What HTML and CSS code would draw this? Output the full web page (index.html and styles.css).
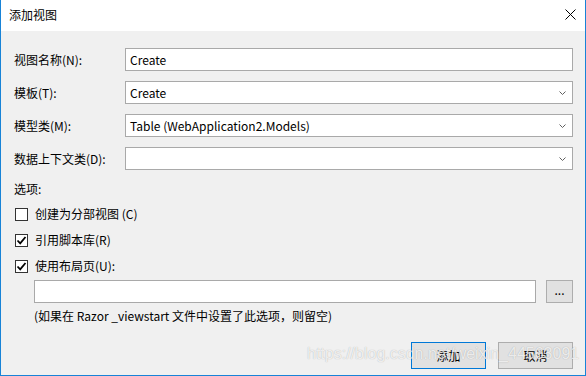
FILE: index.html
```html
<html>

<head>
    <link rel="stylesheet" href="styles.css">
</head>

<body>

    <div class="dialog">
        <div class="titlebar">
            <span class="title">添加视图</span>
            <svg class="close" width="11" height="11" viewBox="0 0 11 11">
                <path d="M0.5 0.5 L10.5 10.5 M10.5 0.5 L0.5 10.5" stroke="#000" stroke-width="1" fill="none" />
            </svg>
        </div>

        <div class="content">
            <div class="fields">
                <label>视图名称(N):</label>
                <div class="field">Create</div>

                <label>模板(T):</label>
                <div class="field combo">Create
                    <svg class="chev" width="7" height="4" viewBox="0 0 7 4"><path d="M0.5 0.5 L3.5 3.5 L6.5 0.5" stroke="#606060" fill="none" /></svg>
                </div>

                <label>模型类(M):</label>
                <div class="field combo">Table (WebApplication2.Models)
                    <svg class="chev" width="7" height="4" viewBox="0 0 7 4"><path d="M0.5 0.5 L3.5 3.5 L6.5 0.5" stroke="#606060" fill="none" /></svg>
                </div>

                <label>数据上下文类(D):</label>
                <div class="field combo">
                    <svg class="chev" width="7" height="4" viewBox="0 0 7 4"><path d="M0.5 0.5 L3.5 3.5 L6.5 0.5" stroke="#606060" fill="none" /></svg>
                </div>
            </div>

            <p class="section">选项:</p>

            <div class="check">
                <span class="box"></span>
                创建为分部视图 (C)
            </div>
            <div class="check">
                <span class="box">
                    <svg width="11" height="11" viewBox="0 0 11 11"><path d="M1.5 5.5 L4.2 8.3 L9.5 2" stroke="#000" stroke-width="1.8" fill="none" /></svg>
                </span>
                引用脚本库(R)
            </div>
            <div class="check">
                <span class="box">
                    <svg width="11" height="11" viewBox="0 0 11 11"><path d="M1.5 5.5 L4.2 8.3 L9.5 2" stroke="#000" stroke-width="1.8" fill="none" /></svg>
                </span>
                使用布局页(U):
            </div>

            <div class="layout">
                <div class="field wide"></div>
                <div class="btn browse">...</div>
            </div>

            <p class="hint">(如果在 Razor _viewstart 文件中设置了此选项，则留空)</p>

            <div class="actions">
                <div class="btn default">添加</div>
                <div class="btn">取消</div>
            </div>
        </div>

        <div class="watermark">https://blog.csdn.net/weixin_44563091</div>
    </div>

</body>

</html>
```

FILE: styles.css
```css
body {
    margin: 0;
    font-family: "Noto Sans CJK SC", "Noto Sans", sans-serif;
    font-size: 12px;
    color: #000;
}

.dialog {
    position: relative;
    width: 584px;
    height: 375px;
    border: 1px solid #1883d7;
    border-top: none;
    background-color: #f0f0f0;
    display: flex;
    flex-direction: column;
}

.titlebar {
    height: 31px;
    background-color: #fff;
    display: flex;
    align-items: center;
    justify-content: space-between;
    padding: 0 9px 0 8px;
}

.title {
    line-height: 16px;
    margin-top: -1px;
}

.close {
    margin-top: -2px;
}

.content {
    padding: 17px 12px 0 12px;
}

.fields {
    display: grid;
    grid-template-columns: 112px 1fr;
    row-gap: 10px;
    align-items: center;
}

.fields label {
    line-height: 23px;
    padding-left: 1px;
}

.field {
    height: 21px;
    line-height: 21px;
    border: 1px solid #a9a9a9;
    background-color: #fff;
    padding-left: 4px;
    position: relative;
}

.combo .chev {
    position: absolute;
    right: 6px;
    top: 9px;
}

.section {
    margin: 11px 0 0 1px;
    line-height: 16px;
}

.check {
    display: flex;
    align-items: center;
    gap: 7px;
    line-height: 16px;
    margin-top: 9px;
    padding-left: 2px;
}

.check + .check {
    margin-top: 10px;
}

.box {
    width: 11px;
    height: 11px;
    border: 1px solid #333;
    background-color: #fff;
    display: flex;
}

.layout {
    display: flex;
    gap: 10px;
    margin: 6px 0 0 21px;
}

.wide {
    flex: 1;
}

.btn {
    border: 1px solid #adadad;
    background-color: #e1e1e1;
    text-align: center;
}

.browse {
    width: 25px;
    height: 21px;
    line-height: 18px;
}

.hint {
    margin: 5px 0 0 21px;
    line-height: 16px;
}

.actions {
    display: flex;
    justify-content: flex-end;
    gap: 12px;
    margin-top: 18px;
}

.actions .btn {
    width: 73px;
    height: 25px;
    line-height: 25px;
}

.btn.default {
    border-color: #0078d7;
}

.watermark {
    position: absolute;
    left: 306px;
    top: 345px;
    font-family: "Liberation Sans", sans-serif;
    font-size: 16px;
    color: rgba(255, 255, 255, 0.8);
    text-shadow: 0 0 1px rgba(0, 0, 0, 0.3);
    pointer-events: none;
}
```
